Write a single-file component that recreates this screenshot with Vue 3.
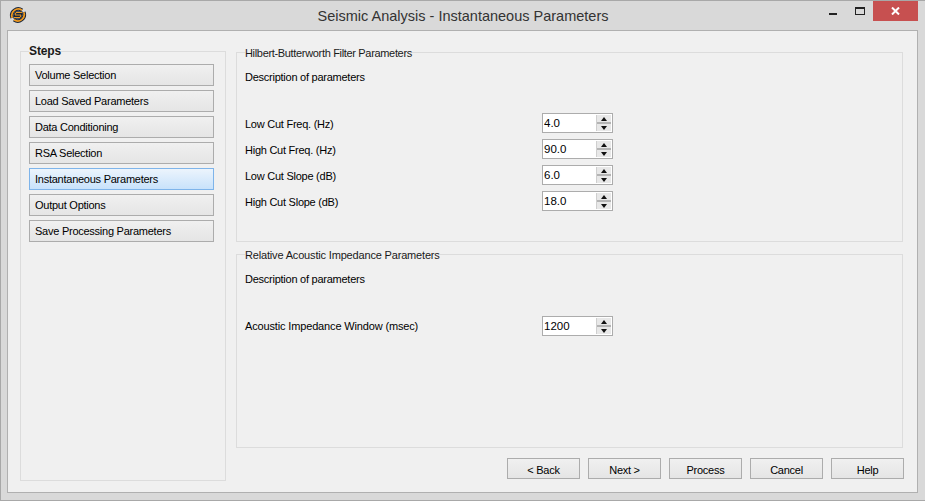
<script setup>
const steps = [
  { label: 'Volume Selection' },
  { label: 'Load Saved Parameters' },
  { label: 'Data Conditioning' },
  { label: 'RSA Selection' },
  { label: 'Instantaneous Parameters', active: true },
  { label: 'Output Options' },
  { label: 'Save Processing Parameters' },
]
const filterRows = [
  { label: 'Low Cut Freq. (Hz)', value: '4.0' },
  { label: 'High Cut Freq. (Hz)', value: '90.0' },
  { label: 'Low Cut Slope (dB)', value: '6.0' },
  { label: 'High Cut Slope (dB)', value: '18.0' },
]
const footer = ['< Back', 'Next >', 'Process', 'Cancel', 'Help']
</script>

<template>
  <div class="window">
    <header class="titlebar">
      <svg class="logo" width="18" height="16" viewBox="0 0 18 16">
        <path d="M3.2 10.8A6.5 6.5 0 0 1 13 3.2M14.8 5.2A6.5 6.5 0 0 1 5 12.8" fill="none" stroke="#16243a" stroke-width="3.6" />
        <path d="M3.2 10.8A6.5 6.5 0 0 1 13 3.2M14.8 5.2A6.5 6.5 0 0 1 5 12.8" fill="none" stroke="#f09a20" stroke-width="1.8" />
        <path d="M13.5 5.5H7L6 8H12L11 10.5H4.5" fill="none" stroke="#16243a" stroke-width="2.6" />
        <path d="M13 5.5H7L6 8H12L11 10.5H5" fill="none" stroke="#f09a20" stroke-width="1" />
      </svg>
      <div class="title">Seismic Analysis - Instantaneous Parameters</div>
      <div class="controls">
        <span class="min-bar"></span>
        <span class="max-box"></span>
        <div class="close">
          <svg width="9" height="8" viewBox="0 0 9 8">
            <path d="M1 0.5L8 7.5M8 0.5L1 7.5" stroke="#fff" stroke-width="2" fill="none" />
          </svg>
        </div>
      </div>
    </header>
    <main class="client">
      <div class="body">
        <fieldset class="group steps">
          <legend class="steps-title">Steps</legend>
          <div class="step-list">
            <button v-for="s in steps" :key="s.label" class="step" :class="{ active: s.active }">{{ s.label }}</button>
          </div>
        </fieldset>
        <div class="panel">
          <fieldset class="group filter">
            <legend>Hilbert-Butterworth Filter Parameters</legend>
            <div class="desc">Description of parameters</div>
            <div class="rows">
              <div v-for="r in filterRows" :key="r.label" class="row">
                <span class="row-label">{{ r.label }}</span>
                <div class="spin">
                  <input class="spin-input" :value="r.value" readonly />
                  <div class="spin-btns">
                    <span class="arrow up"></span>
                    <span class="arrow down"></span>
                  </div>
                </div>
              </div>
            </div>
          </fieldset>
          <fieldset class="group impedance">
            <legend>Relative Acoustic Impedance Parameters</legend>
            <div class="desc">Description of parameters</div>
            <div class="rows single">
              <div class="row">
                <span class="row-label">Acoustic Impedance Window (msec)</span>
                <div class="spin">
                  <input class="spin-input" value="1200" readonly />
                  <div class="spin-btns">
                    <span class="arrow up"></span>
                    <span class="arrow down"></span>
                  </div>
                </div>
              </div>
            </div>
          </fieldset>
          <div class="footer">
            <button v-for="b in footer" :key="b" class="foot-btn">{{ b }}</button>
          </div>
        </div>
      </div>
    </main>
  </div>
</template>

<style scoped>
.window {
  width: 925px;
  height: 501px;
  box-sizing: border-box;
  border: 1px solid #a8a8a8;
  border-right: 0;
  background: #d9d9d9;
  display: flex;
  flex-direction: column;
  font-family: "Liberation Sans", Arial, sans-serif;
  font-size: 11px;
  letter-spacing: -0.25px;
  color: #000;
  overflow: hidden;
}
.titlebar {
  height: 29px;
  flex: none;
  display: flex;
  align-items: flex-start;
  position: relative;
}
.logo {
  margin: 6px 0 0 8px;
}
.title {
  position: absolute;
  left: 0;
  right: 0;
  top: 6px;
  text-align: center;
  font-size: 14.5px;
  letter-spacing: 0;
  color: #333;
  line-height: 18px;
}
.controls {
  margin-left: auto;
  margin-right: 7px;
  display: flex;
  align-items: flex-start;
  position: relative;
}
.min-bar {
  width: 8px;
  height: 2px;
  background: #222;
  margin-top: 12px;
}
.max-box {
  width: 8px;
  height: 5px;
  border: 1px solid #222;
  border-top-width: 2px;
  margin: 6px 8px 0 18px;
}
.close {
  width: 45px;
  height: 20px;
  background: #c75050;
  display: flex;
  align-items: center;
  justify-content: center;
}
.client {
  flex: 1;
  margin: 0 7px 7px 6px;
  border: 1px solid #b0b0b0;
  background: #f0f0f0;
  min-height: 0;
}
.body {
  display: flex;
  padding: 14px 14px 0 12px;
  gap: 10px;
  height: 100%;
  box-sizing: border-box;
}
.group {
  margin: 0;
  padding: 0;
  border: 1px solid #dcdcdc;
  box-sizing: border-box;
  min-width: 0;
}
legend {
  padding: 0;
  margin-left: 8px;
  line-height: 15px;
  height: 13px;
  color: #1a1a1a;
}
.filter legend { letter-spacing: -0.33px; }
.impedance legend { letter-spacing: -0.17px; }
.steps {
  width: 206px;
  height: 436px;
  flex: none;
}
.steps .steps-title {
  font-weight: 700;
  font-size: 12px;
  line-height: 13px;
  letter-spacing: -0.1px;
}
.step-list {
  display: flex;
  flex-direction: column;
  gap: 4px;
  padding: 6px 0 0 8px;
}
.step {
  width: 185px;
  height: 22px;
  box-sizing: border-box;
  padding: 0 0 1px 5px;
  text-align: left;
  border: 1px solid #acacac;
  background: linear-gradient(#f0f0f0, #e5e5e5);
  font: inherit;
  letter-spacing: inherit;
  color: #000;
  border-radius: 0;
}
.step.active {
  border-color: #7eb4ea;
  background: linear-gradient(#ecf4fc, #c8e2fb);
}
.panel {
  flex: 1;
  width: 666px;
  display: flex;
  flex-direction: column;
  min-width: 0;
}
.filter {
  height: 196px;
  flex: none;
  margin-top: 1px;
}
.impedance {
  height: 200px;
  flex: none;
  margin-top: 6px;
}
.desc {
  padding: 11px 0 0 8px;
  line-height: 14px;
}
.rows {
  padding-top: 29px;
  display: flex;
  flex-direction: column;
  gap: 6px;
}
.rows.single { padding-top: 30px; }
.row {
  display: flex;
  align-items: center;
  padding-left: 8px;
  height: 20px;
}
.row-label {
  width: 297px;
  padding-top: 2px;
}
.single .row-label {
  padding-top: 0;
  letter-spacing: -0.15px;
}
.spin {
  width: 71px;
  height: 20px;
  box-sizing: border-box;
  border: 1px solid #acacac;
  background: #fff;
  display: flex;
}
.spin-input {
  flex: 1;
  min-width: 0;
  border: 0;
  outline: 0;
  padding: 0 0 0 1px;
  margin: 0;
  font: inherit;
  font-size: 11.5px;
  letter-spacing: 0;
  color: #000;
  background: transparent;
}
.spin-btns {
  width: 14px;
  margin: 1px 1px 1px 0;
  flex: none;
  display: flex;
  flex-direction: column;
  gap: 2px;
  background: #b4b4b4;
  border-left: 1px solid #cfcfcf;
  box-sizing: content-box;
}
.arrow {
  flex: 1;
  background: #e8e8e8;
  display: flex;
  align-items: center;
  justify-content: center;
}
.arrow::before {
  content: "";
  border-left: 3.5px solid transparent;
  border-right: 3.5px solid transparent;
}
.arrow.up::before { border-bottom: 4px solid #111; }
.arrow.down::before { border-top: 4px solid #111; }
.footer {
  margin-top: 10px;
  display: flex;
  gap: 8px;
  justify-content: flex-end;
  margin-right: -1px;
}
.foot-btn {
  width: 73px;
  height: 21px;
  box-sizing: border-box;
  padding: 2px 0 0;
  border: 1px solid #acacac;
  background: linear-gradient(#f0f0f0, #e5e5e5);
  font: inherit;
  letter-spacing: inherit;
  color: #000;
  border-radius: 0;
}
</style>
